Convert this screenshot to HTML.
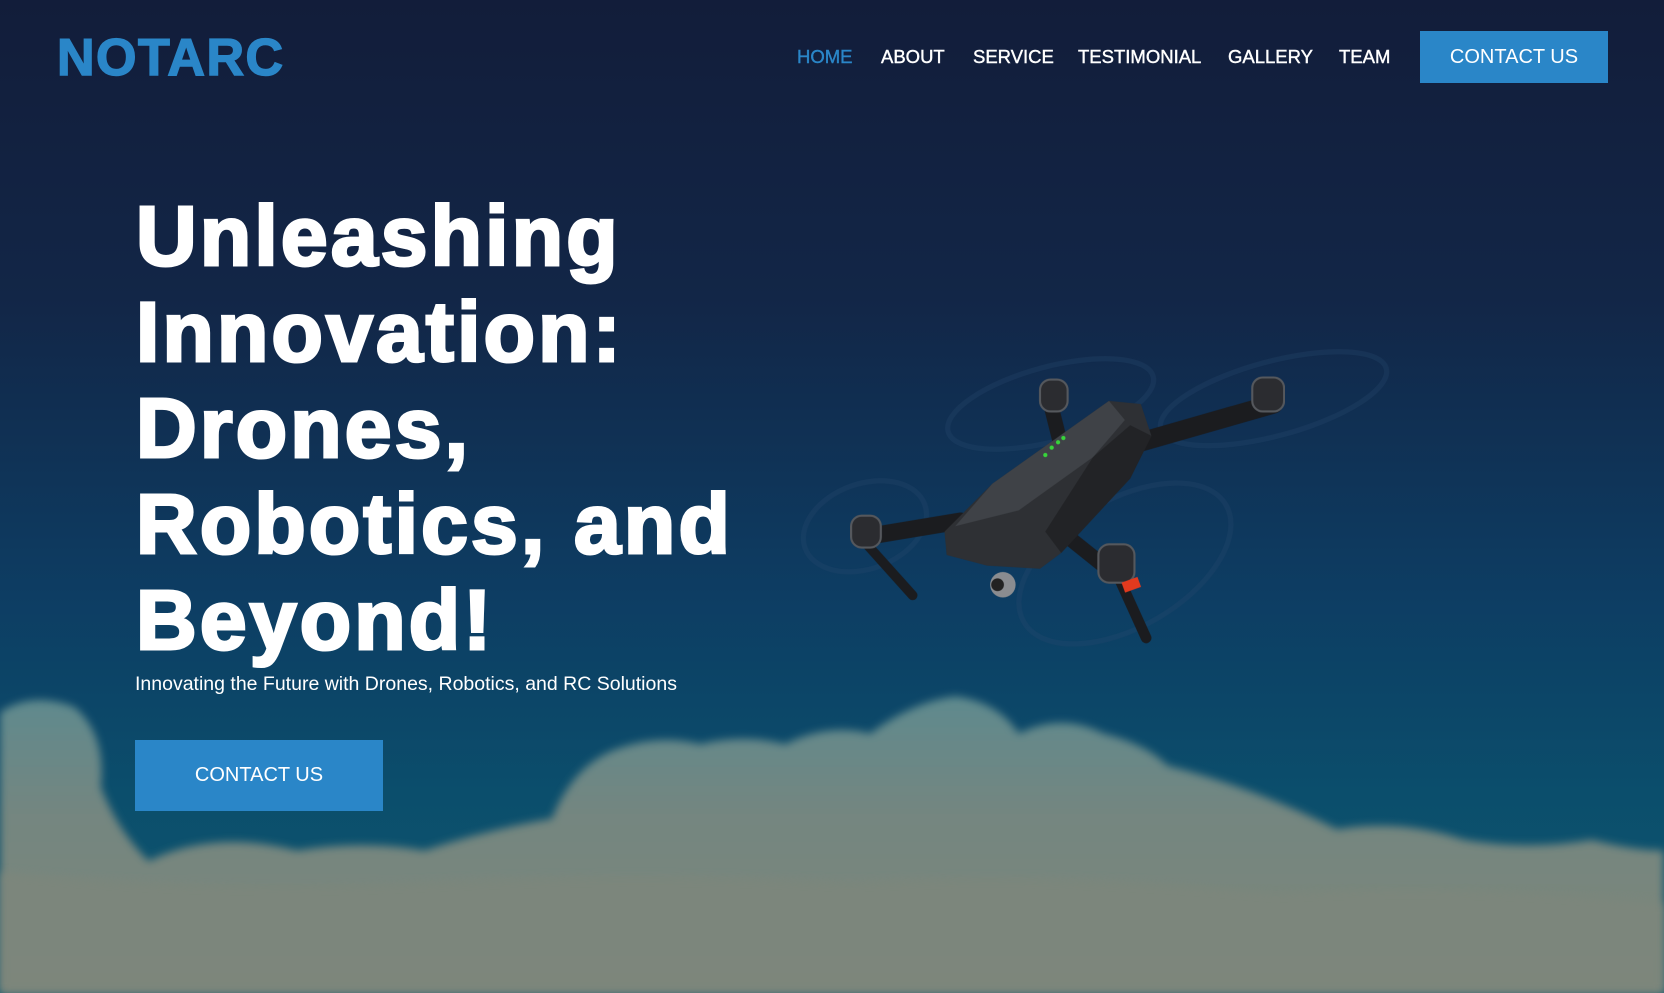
<!DOCTYPE html>
<html><head><meta charset="utf-8">
<style>
*{margin:0;padding:0;box-sizing:border-box}
body{width:1664px;height:993px;overflow:hidden;position:relative;font-family:"Liberation Sans",sans-serif;background:#121f3c}
svg.bg{position:absolute;left:0;top:0}
.logo{position:absolute;left:57px;top:28px;font-size:52px;font-weight:bold;color:#2a86c8;letter-spacing:1.5px;-webkit-text-stroke:1.5px #2a86c8}
nav{position:absolute;top:46px;left:797px;font-size:18.5px;color:#fff;-webkit-text-stroke:0.4px #fff}
nav span{position:absolute;white-space:nowrap}
.btn{position:absolute;background:#2a86c8;color:#fff;display:flex;align-items:center;justify-content:center;font-size:20px}
h1{position:absolute;left:136px;top:188px;font-size:84px;line-height:96px;font-weight:900;color:#fff;letter-spacing:3.2px;width:800px;-webkit-text-stroke:3px #fff}
.sub{position:absolute;left:135px;top:673px;font-size:19.5px;color:#fff}
</style></head><body>
<svg class="bg" width="1664" height="993" viewBox="0 0 1568 934" preserveAspectRatio="none">
<defs>
<linearGradient id="sky" x1="0" y1="0" x2="0" y2="1">
<stop offset="0" stop-color="#121d3a"/><stop offset="0.3" stop-color="#122647"/><stop offset="0.6" stop-color="#0d3d63"/><stop offset="0.8" stop-color="#0b4e6c"/><stop offset="1" stop-color="#0e5870"/>
</linearGradient>
<linearGradient id="cl" x1="0" y1="0" x2="0" y2="1">
<stop offset="0" stop-color="#5f8a8e"/><stop offset="0.4" stop-color="#748680"/><stop offset="1" stop-color="#7f867a"/>
</linearGradient>
<filter id="bl"><feGaussianBlur stdDeviation="4"/></filter>
</defs>
<rect width="1568" height="934" fill="url(#sky)"/>
<path filter="url(#bl)" fill="url(#cl)" d="M0 670 Q30 650 70 665 Q100 690 95 740 Q110 780 140 810 Q200 780 280 800 Q340 790 400 800 Q460 780 520 770 Q540 720 580 705 Q620 690 660 700 Q700 690 740 700 Q780 680 820 690 Q860 660 900 655 Q940 660 960 690 Q1000 670 1040 690 Q1080 700 1100 720 Q1140 730 1180 745 Q1220 760 1260 780 Q1320 770 1380 790 Q1440 800 1500 790 Q1540 800 1568 800 L1568 934 L0 934 Z"/>
<path filter="url(#bl)" fill="#7d867b" opacity="0.8" d="M0 820 Q200 840 400 830 Q600 820 800 830 Q1000 820 1200 840 Q1400 830 1568 850 L1568 934 L0 934Z"/>
<g fill="none" stroke="#2a4a6e" stroke-width="5" opacity="0.3">
<ellipse cx="990" cy="380" rx="100" ry="35" transform="rotate(-15 990 380)"/>
<ellipse cx="1200" cy="375" rx="110" ry="35" transform="rotate(-15 1200 375)"/>
<ellipse cx="815" cy="495" rx="60" ry="40" transform="rotate(-20 815 495)"/>
<ellipse cx="1060" cy="530" rx="110" ry="60" transform="rotate(-30 1060 530)"/>
</g>
<g stroke="#1b1c1f" stroke-linecap="round" fill="none">
<path d="M1060 420 L1200 380" stroke-width="18"/>
<path d="M1000 420 L990 380" stroke-width="14"/>
<path d="M905 490 L815 505" stroke-width="16"/>
<path d="M815 510 L860 560" stroke-width="9"/>
<path d="M1000 500 L1050 540" stroke-width="14"/>
<path d="M1055 545 L1080 600" stroke-width="10"/>
</g>
<path fill="#2e3034" d="M890 500 L935 455 L1045 377 L1075 380 L1085 410 L1065 450 L1000 520 L980 535 L930 532 L892 522 Z"/>
<path fill="#3f4247" d="M935 455 L1045 377 L1060 395 L1030 430 L960 480 L900 495 Z"/>
<path fill="#222326" d="M1030 430 L1065 400 L1085 410 L1065 450 L1000 520 L985 500 Z"/>
<circle cx="945" cy="550" r="12" fill="#8a8c90"/><circle cx="940" cy="550" r="6" fill="#222"/>
<g fill="#37d43a"><circle cx="985" cy="428" r="2"/><circle cx="991" cy="421" r="2"/><circle cx="997" cy="416" r="2"/><circle cx="1002" cy="412" r="2"/></g>
<g fill="#2b2c30" stroke="#55585d" stroke-width="2">
<rect x="980" y="357" width="26" height="30" rx="10"/>
<rect x="1180" y="355" width="30" height="32" rx="10"/>
<rect x="802" y="485" width="28" height="30" rx="10"/>
<rect x="1035" y="512" width="34" height="36" rx="10"/>
</g>
<rect x="1058" y="545" width="16" height="10" fill="#e23a1e" transform="rotate(-20 1066 550)"/>
</svg>
<div class="logo">NOTARC</div>
<nav>
<span style="left:0;color:#2a86c8;-webkit-text-stroke:0.4px #2a86c8">HOME</span>
<span style="left:84px">ABOUT</span>
<span style="left:176px">SERVICE</span>
<span style="left:281px">TESTIMONIAL</span>
<span style="left:431px">GALLERY</span>
<span style="left:542px">TEAM</span>
</nav>
<div class="btn" style="left:1420px;top:31px;width:188px;height:52px">CONTACT US</div>
<h1>Unleashing<br>Innovation:<br>Drones,<br>Robotics, and<br>Beyond!</h1>
<div class="sub">Innovating the Future with Drones, Robotics, and RC Solutions</div>
<div class="btn" style="left:135px;top:740px;width:248px;height:71px">CONTACT US</div>
</body></html>
